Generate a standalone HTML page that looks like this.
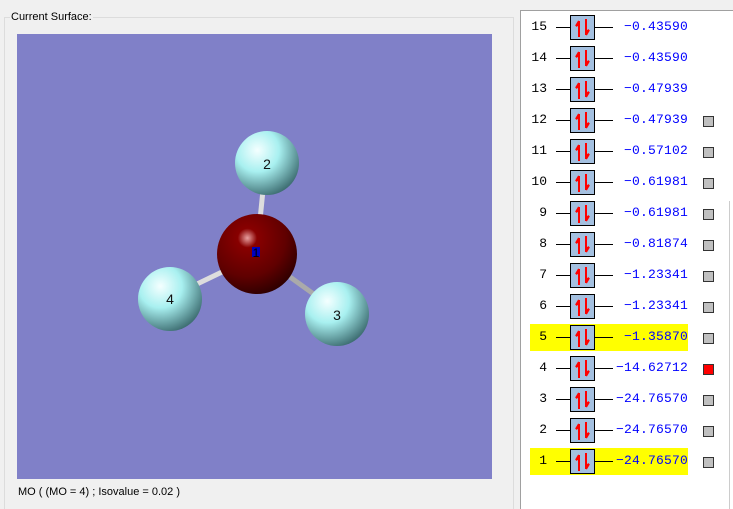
<!DOCTYPE html>
<html><head><style>
html,body{margin:0;width:733px;height:509px;overflow:hidden}
body{background:#f0f0f0;position:relative;font-family:"Liberation Sans",sans-serif}
.grp{position:absolute;left:4px;top:17px;width:508px;height:500px;border:1px solid #dcdcdc}
.lbl{position:absolute;left:10px;top:11px;font-size:11px;background:#f0f0f0;padding:0 1px;color:#000}
.view{position:absolute;left:17px;top:34px;width:475px;height:445px;background:#8080c8}
.cap{position:absolute;left:18px;top:486px;font-size:11px}
.panel{position:absolute;left:520px;top:10px;width:213px;height:499px;background:#fff;border-left:1px solid #a0a0a0;border-top:1px solid #a0a0a0;overflow:hidden}
.row{position:absolute;left:0;width:213px;height:27px;font-family:"Liberation Mono",monospace;font-size:13px}
.hl{position:absolute;left:9px;top:0;width:158px;height:27px;background:#ff0}
.n{position:absolute;left:0;width:26px;text-align:right;top:5px}
.ln{position:absolute;top:13px;height:1px;background:#000}
.box{position:absolute;left:49px;top:1px;width:23px;height:23px;border:1px solid #000;background:#a4c0e0}
.v{position:absolute;right:46px;top:5px;color:#00f;letter-spacing:0.2px}
.sq{position:absolute;left:182px;top:9px;width:9px;height:9px;border:1px solid #333;background:#c0c0c0}
</style></head><body>
<div class="grp"></div>
<div class="lbl">Current Surface:</div>
<div class="view">
<svg width="475" height="445" viewBox="17 34 475 445">
<defs>
<radialGradient id="h" cx="0.35" cy="0.3" r="0.75"><stop offset="0" stop-color="#f4ffff"/><stop offset="0.45" stop-color="#a8f0f0"/><stop offset="1" stop-color="#3c6c70"/></radialGradient>
<radialGradient id="n" cx="0.38" cy="0.3" r="0.8"><stop offset="0" stop-color="#e8a0a0"/><stop offset="0.15" stop-color="#880000"/><stop offset="0.6" stop-color="#600000"/><stop offset="1" stop-color="#200000"/></radialGradient>
</defs>
<line x1="263" y1="190" x2="260" y2="220" stroke="#ddd" stroke-width="5"/>
<line x1="195" y1="285" x2="222" y2="272" stroke="#ddd" stroke-width="5"/>
<line x1="290" y1="277" x2="315" y2="295" stroke="#aaa" stroke-width="5"/>
<circle cx="267" cy="163" r="32" fill="url(#h)"/>
<circle cx="257" cy="254" r="40" fill="url(#n)"/>
<circle cx="170" cy="299" r="32" fill="url(#h)"/>
<circle cx="337" cy="314" r="32" fill="url(#h)"/>
<rect x="252" y="247" width="8" height="10" fill="#0000c0"/>
<text x="256" y="257" font-size="12" text-anchor="middle" fill="#000" font-family="Liberation Sans">1</text>
<text x="267" y="169" font-size="14" text-anchor="middle" fill="#111" font-family="Liberation Sans">2</text>
<text x="170" y="304" font-size="14" text-anchor="middle" fill="#111" font-family="Liberation Sans">4</text>
<text x="337" y="320" font-size="14" text-anchor="middle" fill="#111" font-family="Liberation Sans">3</text>
</svg></div>
<div class="cap">MO ( (MO = 4) ; Isovalue = 0.02 )</div>
<div class="panel">
<div id="rows"></div>
<div style="position:absolute;left:208px;top:190px;width:1px;height:309px;background:#ccc"></div>
</div>
<script>
var d=[[15,"-0.43590",0,0],[14,"-0.43590",0,0],[13,"-0.47939",0,0],[12,"-0.47939",0,1],[11,"-0.57102",0,1],[10,"-0.61981",0,1],[9,"-0.61981",0,1],[8,"-0.81874",0,1],[7,"-1.23341",0,1],[6,"-1.23341",0,1],[5,"-1.35870",1,1],[4,"-14.62712",0,2],[3,"-24.76570",0,1],[2,"-24.76570",0,1],[1,"-24.76570",1,1]];
var h="";
var arr='<svg width="23" height="23"><path d="M8 5 L8 21 M8 5 L5 10 L8 8" stroke="#f00" stroke-width="2" fill="none"/><path d="M15 3 L15 19 M15 19 L18 14 L15 16" stroke="#f00" stroke-width="2" fill="none"/></svg>';
d.forEach(function(r,i){var t=3+i*31;
h+='<div class="row" style="top:'+t+'px">'+(r[2]?'<div class="hl"></div>':'')+
'<div class="n">'+r[0]+'</div><div class="ln" style="left:35px;width:14px"></div><div class="box">'+arr+'</div><div class="ln" style="left:74px;width:18px"></div><div class="v">'+r[1].replace('-','\u2212')+'</div>'+
(r[3]?'<div class="sq" style="'+(r[3]==2?'background:#f00':'')+'"></div>':'')+'</div>';});
document.getElementById('rows').innerHTML=h;
</script>
</body></html>
